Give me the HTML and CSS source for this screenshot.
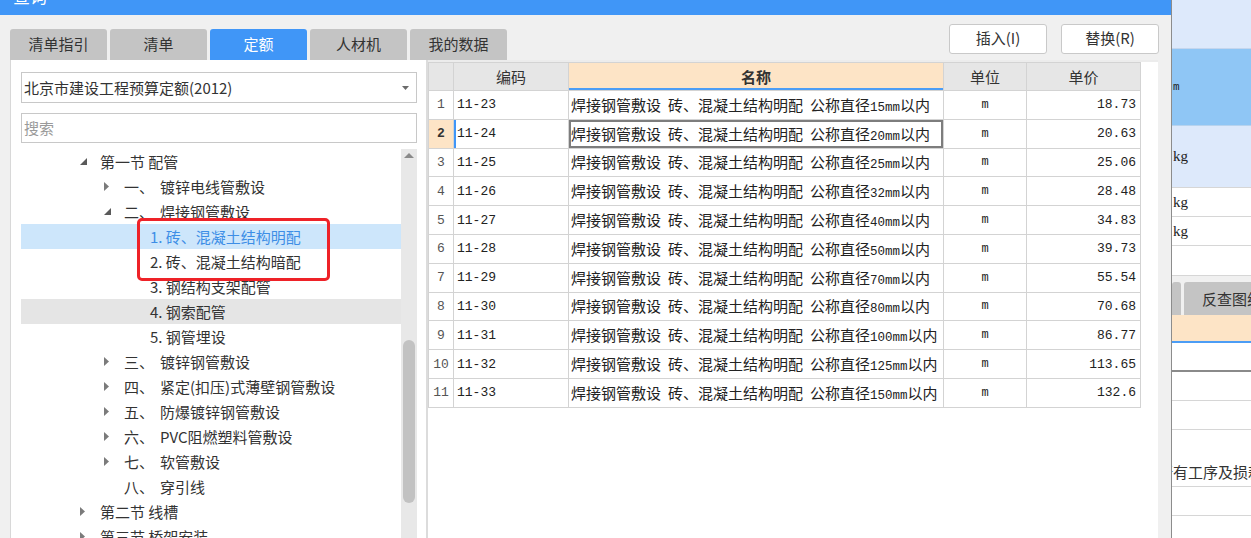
FILE: index.html
```html
<!DOCTYPE html>
<html lang="zh-CN">
<head>
<meta charset="utf-8">
<title>查询</title>
<link rel="stylesheet" href="styles.css">
</head>
<body>
<div class="screen">
  <div class="dialog">
    <div class="titlebar"><span class="title">查询</span></div>
    <div class="dialog-body">
      <div class="toolbar">
        <div class="tabs">
          <div class="tab">清单指引</div>
          <div class="tab">清单</div>
          <div class="tab active">定额</div>
          <div class="tab">人材机</div>
          <div class="tab">我的数据</div>
        </div>
        <div class="actions">
          <button class="btn">插入(I)</button>
          <button class="btn">替换(R)</button>
        </div>
      </div>
      <div class="content">
        <div class="left-panel">
          <div class="select">
            <span>北京市建设工程预算定额(2012)</span>
            <svg class="select-arrow" width="7" height="4" viewBox="0 0 7 4"><polygon points="0,0 7,0 3.5,4" fill="#6b6b6b"/></svg>
          </div>
          <div class="search">搜索</div>
          <div class="tree-wrap">
            <div class="tree">
              <div class="row lv1"><span class="tog"><svg width="7" height="7" viewBox="0 0 7 7"><polygon points="7,0 7,7 0,7" fill="#5a5a5a"/></svg></span><span>第一节 配管</span></div>
              <div class="row lv2"><span class="tog"><svg width="5" height="9" viewBox="0 0 5 9"><polygon points="0,0 5,4.5 0,9" fill="#7b7b7b"/></svg></span><span class="num">一、</span><span>镀锌电线管敷设</span></div>
              <div class="row lv2"><span class="tog"><svg width="7" height="7" viewBox="0 0 7 7"><polygon points="7,0 7,7 0,7" fill="#5a5a5a"/></svg></span><span class="num">二、</span><span>焊接钢管敷设</span></div>
              <div class="row lv3 selected"><span>1. 砖、混凝土结构明配</span></div>
              <div class="row lv3"><span>2. 砖、混凝土结构暗配</span></div>
              <div class="row lv3"><span>3. 钢结构支架配管</span></div>
              <div class="row lv3 hover"><span>4. 钢索配管</span></div>
              <div class="row lv3"><span>5. 钢管埋设</span></div>
              <div class="row lv2"><span class="tog"><svg width="5" height="9" viewBox="0 0 5 9"><polygon points="0,0 5,4.5 0,9" fill="#7b7b7b"/></svg></span><span class="num">三、</span><span>镀锌钢管敷设</span></div>
              <div class="row lv2"><span class="tog"><svg width="5" height="9" viewBox="0 0 5 9"><polygon points="0,0 5,4.5 0,9" fill="#7b7b7b"/></svg></span><span class="num">四、</span><span>紧定(扣压)式薄壁钢管敷设</span></div>
              <div class="row lv2"><span class="tog"><svg width="5" height="9" viewBox="0 0 5 9"><polygon points="0,0 5,4.5 0,9" fill="#7b7b7b"/></svg></span><span class="num">五、</span><span>防爆镀锌钢管敷设</span></div>
              <div class="row lv2"><span class="tog"><svg width="5" height="9" viewBox="0 0 5 9"><polygon points="0,0 5,4.5 0,9" fill="#7b7b7b"/></svg></span><span class="num">六、</span><span>PVC阻燃塑料管敷设</span></div>
              <div class="row lv2"><span class="tog"><svg width="5" height="9" viewBox="0 0 5 9"><polygon points="0,0 5,4.5 0,9" fill="#7b7b7b"/></svg></span><span class="num">七、</span><span>软管敷设</span></div>
              <div class="row lv2"><span class="tog"></span><span class="num">八、</span><span>穿引线</span></div>
              <div class="row lv1"><span class="tog"><svg width="5" height="9" viewBox="0 0 5 9"><polygon points="0,0 5,4.5 0,9" fill="#7b7b7b"/></svg></span><span>第二节 线槽</span></div>
              <div class="row lv1"><span class="tog"><svg width="5" height="9" viewBox="0 0 5 9"><polygon points="0,0 5,4.5 0,9" fill="#7b7b7b"/></svg></span><span>第三节 桥架安装</span></div>
            </div>
            <div class="scrollbar">
              <svg class="sb-up" width="10" height="5" viewBox="0 0 10 5"><polygon points="0,5 5,0 10,5" fill="#8a8a8a"/></svg>
              <div class="sb-thumb"></div>
            </div>
            <div class="mark-box"></div>
          </div>
        </div>
        <div class="splitter"></div>
        <div class="table-panel">
          <table class="grid">
            <colgroup>
              <col class="c-no"><col class="c-code"><col class="c-name"><col class="c-unit"><col class="c-price">
            </colgroup>
            <thead>
              <tr><th></th><th>编码</th><th class="h-name">名称</th><th>单位</th><th>单价</th></tr>
            </thead>
            <tbody>
              <tr><td class="no">1</td><td class="code">11-23</td><td class="name">焊接钢管敷设 砖、混凝土结构明配 公称直径<span class="mm">15mm</span>以内</td><td class="unit">m</td><td class="price">18.73</td></tr>
              <tr class="current"><td class="no">2</td><td class="code">11-24</td><td class="name">焊接钢管敷设 砖、混凝土结构明配 公称直径<span class="mm">20mm</span>以内</td><td class="unit">m</td><td class="price">20.63</td></tr>
              <tr><td class="no">3</td><td class="code">11-25</td><td class="name">焊接钢管敷设 砖、混凝土结构明配 公称直径<span class="mm">25mm</span>以内</td><td class="unit">m</td><td class="price">25.06</td></tr>
              <tr><td class="no">4</td><td class="code">11-26</td><td class="name">焊接钢管敷设 砖、混凝土结构明配 公称直径<span class="mm">32mm</span>以内</td><td class="unit">m</td><td class="price">28.48</td></tr>
              <tr><td class="no">5</td><td class="code">11-27</td><td class="name">焊接钢管敷设 砖、混凝土结构明配 公称直径<span class="mm">40mm</span>以内</td><td class="unit">m</td><td class="price">34.83</td></tr>
              <tr><td class="no">6</td><td class="code">11-28</td><td class="name">焊接钢管敷设 砖、混凝土结构明配 公称直径<span class="mm">50mm</span>以内</td><td class="unit">m</td><td class="price">39.73</td></tr>
              <tr><td class="no">7</td><td class="code">11-29</td><td class="name">焊接钢管敷设 砖、混凝土结构明配 公称直径<span class="mm">70mm</span>以内</td><td class="unit">m</td><td class="price">55.54</td></tr>
              <tr><td class="no">8</td><td class="code">11-30</td><td class="name">焊接钢管敷设 砖、混凝土结构明配 公称直径<span class="mm">80mm</span>以内</td><td class="unit">m</td><td class="price">70.68</td></tr>
              <tr><td class="no">9</td><td class="code">11-31</td><td class="name">焊接钢管敷设 砖、混凝土结构明配 公称直径<span class="mm">100mm</span>以内</td><td class="unit">m</td><td class="price">86.77</td></tr>
              <tr><td class="no">10</td><td class="code">11-32</td><td class="name">焊接钢管敷设 砖、混凝土结构明配 公称直径<span class="mm">125mm</span>以内</td><td class="unit">m</td><td class="price">113.65</td></tr>
              <tr><td class="no">11</td><td class="code">11-33</td><td class="name">焊接钢管敷设 砖、混凝土结构明配 公称直径<span class="mm">150mm</span>以内</td><td class="unit">m</td><td class="price">132.6</td></tr>
            </tbody>
          </table>
        </div>
      </div>
    </div>
  </div>
  <div class="side">
    <div class="s-row s-top"></div>
    <div class="s-row s-blue"><span class="s-m">m</span></div>
    <div class="s-row s-light"><span class="s-kg">kg</span></div>
    <div class="s-row s-white"><span class="s-kg">kg</span></div>
    <div class="s-row s-white"><span class="s-kg">kg</span></div>
    <div class="s-row s-white s-last"></div>
    <div class="s-gap"></div>
    <div class="s-tabs">
      <div class="s-tab s-tab-cut"></div>
      <div class="s-tab">反查图纸</div>
    </div>
    <div class="s-head"></div>
    <div class="s-line s-line-sel"></div>
    <div class="s-line"></div>
    <div class="s-line"></div>
    <div class="s-line s-tall"><span class="s-text">所有工序及损耗</span></div>
    <div class="s-line"></div>
    <div class="s-line"></div>
  </div>
</div>
</body>
</html>
```
FILE: styles.css
```css
* { box-sizing: border-box; }

body {
  margin: 0;
  width: 1251px;
  height: 538px;
  overflow: hidden;
  font-family: "Noto Sans CJK SC", "Noto Sans", sans-serif;
  color: #333;
  background: #f0f0f0;
}

.screen {
  display: flex;
  height: 538px;
}

/* ---------- dialog ---------- */
.dialog {
  width: 1171px;
  display: flex;
  flex-direction: column;
  background: #f0f0f0;
}

.titlebar {
  height: 15px;
  background: #4096f7;
  overflow: hidden;
  padding-left: 13px;
}

.title {
  display: block;
  color: #fff;
  font-size: 17px;
  line-height: 20px;
  margin-top: -14px;
}

.dialog-body {
  flex: 1;
  min-height: 0;
  display: flex;
  flex-direction: column;
  padding: 0 12px 0 10px;
}

.toolbar {
  height: 45px;
  display: flex;
  justify-content: space-between;
}

.tabs {
  display: flex;
  gap: 3px;
  align-self: flex-end;
}

.tab {
  width: 97px;
  height: 31px;
  line-height: 30px;
  text-align: center;
  font-size: 15px;
  color: #333;
  background: #c4c4c4;
  border-radius: 3px 3px 0 0;
}

.tab.active {
  background: #4096f7;
  color: #fff;
}

.actions {
  display: flex;
  gap: 14px;
  padding-top: 9px;
}

.btn {
  width: 98px;
  height: 30px;
  border: 1px solid #c9c9c9;
  border-radius: 3px;
  background: #fff;
  font-family: "Noto Sans CJK SC", sans-serif;
  font-size: 15px;
  line-height: 26px;
  color: #333;
  padding: 0 0 2px;
}

.content {
  flex: 1;
  min-height: 0;
  display: flex;
}

/* ---------- left panel ---------- */
.left-panel {
  width: 416px;
  background: #fff;
  border-left: 1px solid #d8d8d8;
  padding: 12px 9px 0 10px;
  display: flex;
  flex-direction: column;
}

.select {
  height: 31px;
  border: 1px solid #c8c8c8;
  display: flex;
  align-items: center;
  justify-content: space-between;
  padding: 0 7px 0 2px;
  font-size: 15px;
  color: #333;
}

.search {
  margin-top: 10px;
  height: 30px;
  border: 1px solid #c8c8c8;
  padding-left: 2px;
  font-size: 15px;
  line-height: 28px;
  color: #9a9a9a;
}

.tree-wrap {
  margin-top: 6px;
  flex: 1;
  min-height: 0;
  display: flex;
  position: relative;
  overflow: hidden;
}

.tree {
  width: 380px;
}

.row {
  height: 25px;
  line-height: 25px;
  font-size: 15px;
  color: #333;
  display: flex;
  align-items: center;
  white-space: nowrap;
}

.row.lv1 { padding-left: 59px; }
.row.lv2 { padding-left: 83px; }
.row.lv3 { padding-left: 129px; }

.tog {
  width: 20px;
  flex: none;
  display: flex;
  align-items: center;
}

.num {
  width: 36px;
  flex: none;
}

.row.selected {
  background: #cde6fb;
  color: #3d8ee6;
}

.row.hover {
  background: #e5e5e5;
}

.scrollbar {
  width: 16px;
  background: #e8e8e8;
  display: flex;
  flex-direction: column;
  align-items: center;
  padding-top: 4px;
}

.sb-up {
  display: block;
  flex: none;
}

.sb-thumb {
  margin-top: 182px;
  width: 12px;
  height: 163px;
  border-radius: 6px;
  background: #c2c2c2;
}

.mark-box {
  position: absolute;
  left: 116px;
  top: 69px;
  width: 193px;
  height: 63px;
  border: 3px solid #ee2228;
  border-radius: 5px;
}

.splitter {
  width: 2px;
  background: #dcdcdc;
}

/* ---------- table ---------- */
.table-panel {
  width: 730px;
  background: #fff;
  border-top: 2px solid #ececec;
}

.grid {
  width: 712px;
  table-layout: fixed;
  border-collapse: collapse;
}

.c-no { width: 25px; }
.c-code { width: 115px; }
.c-name { width: 375px; }
.c-unit { width: 83px; }
.c-price { width: 114px; }

.grid th,
.grid td {
  border: 1px solid #d3d3d3;
  padding: 0;
  white-space: nowrap;
  overflow: hidden;
}

.grid thead tr { height: 28px; }

.grid th {
  background: #e6e6e6;
  font-weight: normal;
  font-size: 15px;
  color: #333;
  text-align: center;
}

.grid th.h-name {
  background: #fde4c6;
  font-weight: bold;
  box-shadow: inset 0 -2px 0 #4c9df5;
}

.grid tbody tr { height: 28.8px; }

.grid td.no {
  text-align: center;
  font-family: "Liberation Mono", monospace;
  font-size: 13px;
  color: #555;
}

.grid td.code {
  padding-left: 3px;
  font-family: "Liberation Mono", monospace;
  font-size: 13px;
  color: #222;
}

.grid td.name {
  padding-left: 2px;
  font-family: "Liberation Mono", "Noto Sans CJK SC", monospace;
  font-size: 15px;
  word-spacing: -2px;
  color: #222;
}

.mm {
  font-family: "Liberation Mono", monospace;
  font-size: 12.5px;
  word-spacing: 0;
}

.grid td.unit {
  text-align: center;
  font-family: "Liberation Mono", monospace;
  font-size: 12px;
  color: #222;
}

.grid td.price {
  text-align: right;
  padding-right: 4px;
  font-family: "Liberation Mono", monospace;
  font-size: 13px;
  color: #222;
}

.grid tr.current td.no {
  background: #fde4c6;
  font-weight: bold;
  color: #333;
}

.grid tr.current td.code {
  box-shadow: inset 2px 0 0 #4096f7;
}

.grid tr.current td.name {
  box-shadow: inset 0 0 0 2px #7d7d7d;
}

/* ---------- side panel ---------- */
.side {
  flex: 1;
  min-width: 0;
  border-left: 1px solid #8c8c8c;
  background: #fff;
  overflow: hidden;
  display: flex;
  flex-direction: column;
}

.s-row {
  flex: none;
  display: flex;
  align-items: center;
  padding-left: 1px;
  border-bottom: 1px solid #d6d6d6;
}

.s-top { height: 49px; background: #dde9fb; border-bottom-color: #c4d6ee; }
.s-blue { height: 77px; background: #8fc6f5; border-bottom-color: #b7d3ee; }
.s-light { height: 62px; background: #dde9fb; }
.s-white { height: 29px; }
.s-last { height: 30px; }

.s-m {
  font-family: "Liberation Mono", monospace;
  font-size: 11px;
  color: #222;
}

.s-kg {
  font-family: "Liberation Serif", serif;
  font-size: 15px;
  color: #222;
}

.s-gap {
  height: 6px;
  flex: none;
  background: #f0f0f0;
}

.s-tabs {
  flex: none;
  height: 33px;
  display: flex;
  gap: 3px;
  background: #f0f0f0;
}

.s-tab {
  flex: none;
  width: 97px;
  background: #c4c4c4;
  border-radius: 3px 3px 0 0;
  font-size: 15px;
  line-height: 33px;
  padding-left: 18px;
  color: #333;
  white-space: nowrap;
}

.s-tab-cut {
  width: 9px;
  padding: 0;
}

.s-head {
  flex: none;
  height: 28px;
  background: #fde4c6;
  border-bottom: 2px solid #4c9df5;
}

.s-line {
  flex: none;
  height: 29px;
  border-bottom: 1px solid #d6d6d6;
}

.s-line-sel {
  border-bottom: 2px solid #8a8a8a;
}

.s-tall {
  height: 57px;
  display: flex;
  align-items: flex-end;
  padding-bottom: 4px;
}

.s-text {
  margin-left: -14px;
  font-size: 15px;
  line-height: 20px;
  color: #333;
  white-space: nowrap;
}
```
